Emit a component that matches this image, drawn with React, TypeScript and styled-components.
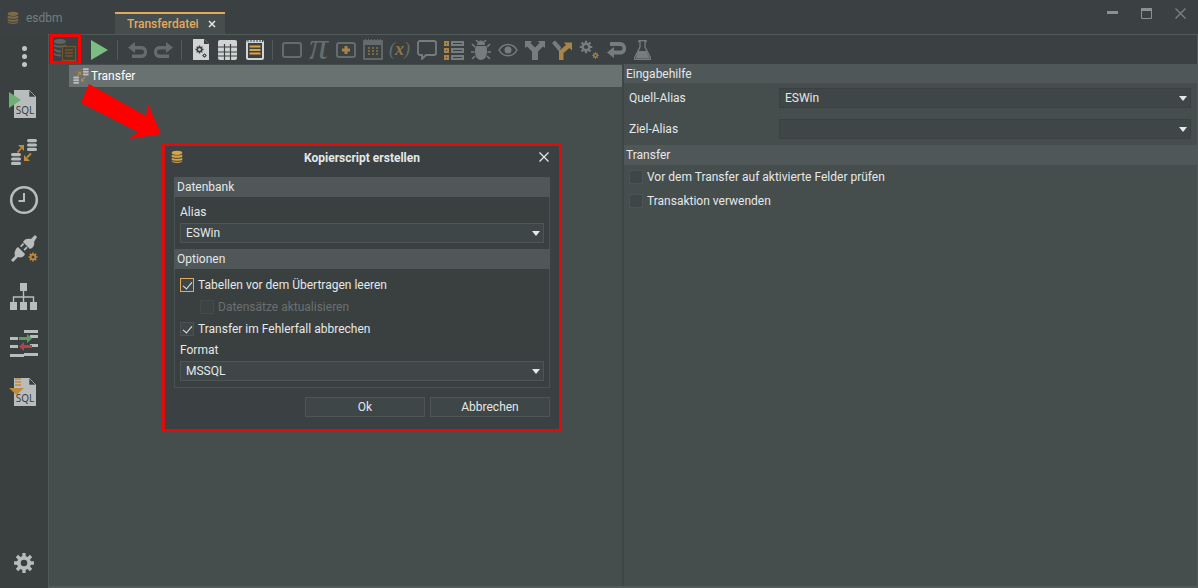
import React from "react";
import styled, { createGlobalStyle } from "styled-components";

const GlobalStyle = createGlobalStyle`
  html, body, #root { margin: 0; padding: 0; width: 100%; height: 100%; overflow: hidden; }
  body {
    background: #3b4142;
    color: #e4e8e8;
    font-family: Roboto, "Noto Sans", sans-serif;
    font-size: 12px;
  }
  * { box-sizing: border-box; }
`;

const GREY = "#777d7d";
const DIM = "#666c6c";
const ORANGE = "#a8834a";

const Db = ({ size = 16, color = ORANGE }: { size?: number; color?: string }) => (
  <svg width={size} height={size} viewBox="0 0 16 16">
    <ellipse cx="8" cy="3.2" rx="6" ry="2.4" fill={color} />
    <path d="M2 5.2c1 1.6 11 1.6 12 0v2.4c-1 1.6-11 1.6-12 0zM2 8.8c1 1.6 11 1.6 12 0v2.4c-1 1.6-11 1.6-12 0zM2 12.2c1 1.6 11 1.6 12 0v.6c-.6 2.6-11.4 2.6-12 0z" fill={color} />
  </svg>
);

const Ico = ({ children, w = 22, h = 22, vb = "0 0 22 22" }: { children: React.ReactNode; w?: number; h?: number; vb?: string }) => (
  <svg width={w} height={h} viewBox={vb}>{children}</svg>
);

const SqlDoc = ({ children }: { children?: React.ReactNode }) => (
  <Ico w={30} h={30} vb="0 0 30 30">
    <path d="M5 1h15l7 7v21H5z" fill="#b9bcbc" />
    <path d="M20 1l7 7h-7z" fill="#3a4040" stroke="#b9bcbc" strokeWidth=".6" />
    <text x="16" y="25" fontSize="10" textAnchor="middle" fill="#3a4040" fontFamily="Noto Sans, sans-serif">SQL</text>
    {children}
  </Ico>
);

const DbStack = ({ x, y }: { x: number; y: number }) => (
  <g transform={`translate(${x} ${y})`} fill="#b9bcbc">
    <rect x="0" y="0" width="10" height="3.2" rx="1.6" />
    <rect x="0" y="4.4" width="10" height="3.2" rx="1.6" />
    <rect x="0" y="8.8" width="10" height="3.2" rx="1.6" />
  </g>
);

const TransferIcon = ({ scale = 30 }: { scale?: number }) => (
  <Ico w={scale} h={scale} vb="0 0 30 30">
    <DbStack x={18} y={2} />
    <DbStack x={2} y={16} />
    <path d="M15 8v6L9 8z" fill="#c08a3c" />
    <path d="M8.5 15.5L12 11.5" stroke="#c08a3c" strokeWidth="1.8" />
    <path d="M15 24v-6l6 6z" fill="#c08a3c" />
    <path d="M22 16.5L18 20.5" stroke="#c08a3c" strokeWidth="1.8" />
  </Ico>
);

const Gear = ({ size = 20, color = "#b9bcbc", hole = "#3a4040" }: { size?: number; color?: string; hole?: string }) => (
  <svg width={size} height={size} viewBox="0 0 20 20">
    <g stroke={color} strokeWidth="3">
      <path d="M10 1v18M1 10h18M3.6 3.6l12.8 12.8M16.4 3.6L3.6 16.4" />
    </g>
    <circle cx="10" cy="10" r="6.4" fill={color} />
    <circle cx="10" cy="10" r="3" fill={hole} />
  </svg>
);

const App = () => (
  <Page>
    <GlobalStyle />
    <TitleBar>
      <AppName>
        <Db size={14} color="#7f6a48" />
        <span>esdbm</span>
      </AppName>
      <Tab>
        <TabLabel>Transferdatei</TabLabel>
        <svg width="8" height="8" viewBox="0 0 8 8"><path d="M1 1l6 6M7 1L1 7" stroke="#e4e8e8" strokeWidth="1.5" /></svg>
      </Tab>
      <WindowButtons>
        <svg width="11" height="4" viewBox="0 0 11 4"><rect y="0" width="11" height="3" fill="#8b9090" /></svg>
        <svg width="11" height="11" viewBox="0 0 11 11"><path d="M.5.5h10v10H.5z" fill="none" stroke="#8b9090" /><rect width="11" height="3" fill="#8b9090" /></svg>
        <svg width="11" height="11" viewBox="0 0 11 11"><path d="M.5.5l10 10M10.5.5l-10 10" stroke="#7b8080" strokeWidth="1.4" /></svg>
      </WindowButtons>
    </TitleBar>

    <Body>
      <Sidebar>
        <KebabItem $h={46}>
          <Kebab><i /><i /><i /></Kebab>
        </KebabItem>
        <SideItem>
          <SqlDoc><path d="M0 3l12 8-12 8z" fill="#6fae74" /></SqlDoc>
        </SideItem>
        <SideItem><TransferIcon /></SideItem>
        <SideItem>
          <Ico w={30} h={30} vb="0 0 30 30">
            <circle cx="15" cy="15" r="12.8" fill="none" stroke="#b9bcbc" strokeWidth="2.6" />
            <path d="M15 8v8H9.5" fill="none" stroke="#b9bcbc" strokeWidth="2" />
          </Ico>
        </SideItem>
        <SideItem $h={50}>
          <Ico w={30} h={30} vb="0 0 30 30">
            <path d="M14 8L21 15C24 14 26 11 25 8L28 3L26 1L22 5C19 4 15 5 14 8z" fill="#b9bcbc" />
            <path d="M9 13L16 20C15 23 12 24 9 23L4 28L2 26L6 22C5 19 6 15 9 13z" fill="#b9bcbc" />
            <path d="M11 12l3-3 1.2 1.2-3 3zM14.5 15.5l3-3 1.2 1.2-3 3z" fill="#b9bcbc" />
            <g transform="translate(19 18)"><Gear size={10} color="#c08a3c" /></g>
          </Ico>
        </SideItem>
        <SideItem $h={45}>
          <Ico w={30} h={30} vb="0 0 30 30">
            <path d="M11 1h7v8h-7zM1 20h7v8H1zM11 20h7v8h-7zM21 20h7v8h-7z" fill="#b9bcbc" />
            <path d="M14.5 9v11M4.5 20v-5h20v5" fill="none" stroke="#b9bcbc" strokeWidth="1.4" />
          </Ico>
        </SideItem>
        <SideItem $h={50}>
          <Ico w={30} h={30} vb="0 0 30 30">
            <g fill="#b9bcbc">
              <rect x="15" y="1" width="14" height="3" />
              <rect x="1" y="8" width="8" height="3" />
              <rect x="21" y="6" width="8" height="3" />
              <rect x="1" y="16" width="8" height="3" />
              <rect x="21" y="15" width="8" height="3" />
              <rect x="1" y="25" width="14" height="3" />
              <rect x="15" y="24" width="14" height="3" />
            </g>
            <path d="M10 8h8V5l5 4.5-5 4.5v-3h-8z" fill="#5f9a64" />
            <path d="M23 16h-8v-3l-5 4.5 5 4.5v-3h8z" fill="#b0444a" />
          </Ico>
        </SideItem>
        <SideItem $h={46}>
          <SqlDoc>
            <path d="M6 2h6M6 5h6M6 8h6" stroke="#c08a3c" strokeWidth="1.4" />
            <path d="M0 11h15l-7.500 7z" fill="#c08a3c" />
          </SqlDoc>
        </SideItem>
        <GearItem><Gear size={22} /></GearItem>
      </Sidebar>

      <Main>
        <Toolbar>
          <ToolBtn $w={32}>
            <Ico w={24} h={24} vb="0 0 24 24">
              <g fill="#5f6361">
                <ellipse cx="7" cy="3.5" rx="6" ry="2.5" />
                <path d="M1 6c1 2 11 2 12 0v2c-1 2-11 2-12 0zM1 10c1 2 7 2.500 7 2.500v2C6 15 2 14 1 12zM1 15c1 1 5 1.500 7 1.500v2c-2 0-6-.5-7-2z" />
              </g>
              <rect x="9.5" y="8.5" width="13" height="14" fill="#443e34" stroke="#6e5732" strokeWidth="1.2" />
              <path d="M12 12h8M12 15h8M12 18h8" stroke="#6e5732" strokeWidth="1.3" />
            </Ico>
          </ToolBtn>
          <ToolBtn $w={28} $ml={4}>
            <Ico w={20} h={22} vb="0 0 20 22"><path d="M2 1l17 10L2 21z" fill="#7cbd83" /></Ico>
          </ToolBtn>
          <Sep />
          <ToolBtn>
            <Ico w={20} h={18} vb="0 0 20 18"><path d="M8 1L1 6.5 8 12V8.500h6c2 0 3 1 3 2.500s-1 2.500-3 2.500H5V17h9c4 0 6-2.500 6-6s-2-6-6-6H8z" fill={DIM} /></Ico>
          </ToolBtn>
          <ToolBtn>
            <Ico w={20} h={18} vb="0 0 20 18"><path d="M12 1l7 5.5L12 12V8.500H6c-2 0-3 1-3 2.500s1 2.500 3 2.500h9V17H6c-4 0-6-2.500-6-6s2-6 6-6h6z" fill={DIM} /></Ico>
          </ToolBtn>
          <Sep />
          <ToolBtn>
            <Ico w={16} h={21} vb="0 0 16 21">
              <path d="M0 0h11l5 5v16H0z" fill="#d2d4d4" />
              <path d="M11 0l5 5h-5z" fill="#3b4142" />
              <g transform="translate(2 6)"><Gear size={9} color="#3b4142" hole="#d2d4d4" /></g>
              <g transform="translate(9 14)"><Gear size={5} color="#3b4142" hole="#d2d4d4" /></g>
            </Ico>
          </ToolBtn>
          <ToolBtn>
            <Ico w={19} h={20} vb="0 0 19 20">
              <rect width="19" height="20" rx="2" fill="#d2d4d4" />
              <path d="M0 7h19M0 12h19M0 16h19M6.5 4v16M12.5 4v16" stroke="#3b4142" strokeWidth="1.2" />
            </Ico>
          </ToolBtn>
          <ToolBtn>
            <Ico w={18} h={21} vb="0 0 18 21">
              <rect y="1" width="18" height="20" rx="2" fill="#d2d4d4" />
              <path d="M2 0v3M5 0v3M8 0v3M11 0v3M14 0v3M16.5 0v3" stroke="#3b4142" />
              <rect x="2" y="4" width="14" height="15" fill="#3b4142" />
              <path d="M3.5 7.5h11M3.5 11h11M3.5 14.5h11" stroke="#d9a445" strokeWidth="2" />
            </Ico>
          </ToolBtn>
          <Sep />
          <ToolBtn>
            <Ico w={20} h={16} vb="0 0 20 16"><rect x="1" y="1" width="18" height="14" rx="2" fill="none" stroke={DIM} strokeWidth="2" /></Ico>
          </ToolBtn>
          <ToolBtn>
            <PiGlyph>π</PiGlyph>
          </ToolBtn>
          <ToolBtn>
            <Ico w={20} h={16} vb="0 0 20 16">
              <rect x="1" y="1" width="18" height="14" rx="2" fill="none" stroke={DIM} strokeWidth="2" />
              <path d="M10 4v8M6 8h8" stroke={ORANGE} strokeWidth="3" />
            </Ico>
          </ToolBtn>
          <ToolBtn>
            <Ico w={20} h={21} vb="0 0 20 21">
              <rect x="1" y="2" width="18" height="18" fill="none" stroke={DIM} strokeWidth="1.8" />
              <rect x="1" y="2" width="18" height="4" fill={DIM} />
              <path d="M2.5 0v3M5.5 0v3M8.5 0v3M11.5 0v3M14.5 0v3M17.5 0v3" stroke={DIM} />
              <path d="M5 9h2M9 9h2M13 9h2M5 12h2M9 12h2M13 12h2M5 15h2M9 15h2M13 15h2" stroke="#8f7545" strokeWidth="1.5" />
            </Ico>
          </ToolBtn>
          <ToolBtn>
            <FuncGlyph>(<b>x</b>)</FuncGlyph>
          </ToolBtn>
          <ToolBtn>
            <Ico w={20} h={20} vb="0 0 20 20"><path d="M3 1h14c1 0 2 1 2 2v10c0 1-1 2-2 2H9l-4 4v-4H3c-1 0-2-1-2-2V3c0-1 1-2 2-2z" fill="none" stroke={GREY} strokeWidth="1.800" /></Ico>
          </ToolBtn>
          <ToolBtn>
            <Ico w={20} h={20} vb="0 0 20 20">
              <path d="M0 1h5v5H0zM0 8h5v5H0zM0 15h5v5H0z" fill={ORANGE} />
              <path d="M2 3h1v1H2zM2 10h1v1H2zM2 17h1v1H2z" fill="#3b4142" />
              <path d="M7 1h13v5H7zM7 8h13v5H7zM7 15h13v5H7z" fill={GREY} />
              <path d="M9 3h9v1H9zM9 10h9v1H9zM9 17h9v1H9z" fill="#3b4142" />
            </Ico>
          </ToolBtn>
          <ToolBtn>
            <Ico w={20} h={20} vb="0 0 20 20">
              <path d="M6 5c0-6 8-6 8 0zM5 6h10c1 1 1 3 1 6 0 5-3 8-6 8s-6-3-6-8c0-3 0-5 1-6z" fill={GREY} />
              <path d="M4 7L1 4M16 7l3-3M3.5 12H0M16.5 12H20M4 16l-3 3M16 16l3 3M7 2L5 0M13 2l2-2" stroke={GREY} strokeWidth="1.600" />
            </Ico>
          </ToolBtn>
          <ToolBtn>
            <Ico w={20} h={14} vb="0 0 20 14">
              <path d="M1 7c4-7.5 14-7.5 18 0-4 7.5-14 7.5-18 0z" fill="none" stroke={GREY} strokeWidth="1.500" />
              <circle cx="10" cy="7" r="3.5" fill={GREY} />
            </Ico>
          </ToolBtn>
          <ToolBtn>
            <Ico w={20} h={20} vb="0 0 20 20"><path d="M0 1h7L5.500 3 10 7.500 14.500 3 13 1h7v7l-2-1.500-5 5V20H7v-8.500l-5-5L0 8z" fill={GREY} /></Ico>
          </ToolBtn>
          <ToolBtn>
            <Ico w={20} h={20} vb="0 0 20 20">
              <path d="M0 3l3-2.500 6 6.500-1.500 5z" fill={GREY} />
              <path d="M7 20v-9L14 5l-2-2.500h8v8L17.500 8 11.500 13v7z" fill={ORANGE} />
            </Ico>
          </ToolBtn>
          <ToolBtn>
            <Ico w={20} h={20} vb="0 0 20 20">
              <Gear size={14} color={GREY} hole="#3b4142" />
              <g transform="translate(13 12)"><Gear size={7} color={ORANGE} hole="#3b4142" /></g>
            </Ico>
          </ToolBtn>
          <ToolBtn>
            <Ico w={20} h={18} vb="0 0 20 18"><path d="M8 6L1 11.500 8 17v-3.500h6c4 0 6-2.500 6-6S18 1 14 1H4v4h10c2 0 2.500 1 2.500 2.500S16 9.500 14 9.500H8z" fill={GREY} /></Ico>
          </ToolBtn>
          <ToolBtn>
            <Ico w={17} h={20} vb="0 0 17 20">
              <path d="M5 .5h7v1h-1V7l5.500 11c.5 1 0 1.500-1 1.500h-14c-1 0-1.500-.5-1-1.500L6 7V1.500H5z" fill="none" stroke={GREY} strokeWidth="1.300" />
              <path d="M4.500 11h8l3 7.500h-14z" fill={GREY} />
            </Ico>
          </ToolBtn>
        </Toolbar>

        <Panes>
          <TreePane>
            <TreeRow>
              <TransferIcon scale={18} />
              <span>Transfer</span>
            </TreeRow>
          </TreePane>
          <PropPane>
            <SectionHeader $h={19}>Eingabehilfe</SectionHeader>
            <PropGroup>
              <PropRow>
                <PropLabel>Quell-Alias</PropLabel>
                <Combo $fill>ESWin<Caret /></Combo>
              </PropRow>
              <PropRow>
                <PropLabel>Ziel-Alias</PropLabel>
                <Combo $fill><Caret /></Combo>
              </PropRow>
            </PropGroup>
            <SectionHeader>Transfer</SectionHeader>
            <CheckList>
              <CheckRow><Check />Vor dem Transfer auf aktivierte Felder prüfen</CheckRow>
              <CheckRow><Check />Transaktion verwenden</CheckRow>
            </CheckList>
          </PropPane>
        </Panes>
      </Main>
    </Body>

    <Highlight />
    <Arrow width="82" height="56" viewBox="0 0 82 56">
      <path d="M8 0L65 32 67 20 80 50 48 55 57 48 0 19z" fill="#ff0000" />
    </Arrow>

    <Dialog>
      <DialogTitle>
        <DialogIcon><Db size={14} color="#d9a445" /></DialogIcon>
        <strong>Kopierscript erstellen</strong>
        <DialogClose>
          <svg width="10" height="10" viewBox="0 0 10 10"><path d="M.5.5l9 9M9.5.5l-9 9" stroke="#e4e8e8" strokeWidth="1.300" /></svg>
        </DialogClose>
      </DialogTitle>
      <DialogBody>
        <GroupHeader>Datenbank</GroupHeader>
        <GroupBox>
          <FieldLabel>Alias</FieldLabel>
          <Combo>ESWin<Caret /></Combo>
        </GroupBox>
        <GroupHeader>Optionen</GroupHeader>
        <OptionBox>
          <CheckRow $h={22}><Check $on $focus />Tabellen vor dem Übertragen leeren</CheckRow>
          <CheckRow $h={22} $indent $off><Check $off />Datensätze aktualisieren</CheckRow>
          <CheckRow $h={22}><Check $on />Transfer im Fehlerfall abbrechen</CheckRow>
          <FieldLabel $mt={1}>Format</FieldLabel>
          <Combo>MSSQL<Caret /></Combo>
        </OptionBox>
        <DialogButtons>
          <Btn>Ok</Btn>
          <Btn>Abbrechen</Btn>
        </DialogButtons>
      </DialogBody>
    </Dialog>
  </Page>
);

const Page = styled.div`
  position: relative;
  width: 1198px;
  height: 588px;
  display: flex;
  flex-direction: column;
  background: #3b4142;
  overflow: hidden;
`;

const TitleBar = styled.div`
  height: 34px;
  display: flex;
  align-items: flex-end;
  flex-shrink: 0;
`;

const AppName = styled.div`
  width: 115px;
  height: 34px;
  padding: 2px 0 0 6px;
  display: flex;
  align-items: center;
  gap: 6px;
  color: #717e7f;
  font-size: 12px;
`;

const Tab = styled.div`
  width: 110px;
  height: 22px;
  padding: 0 9px 0 12px;
  display: flex;
  align-items: center;
  justify-content: space-between;
  background: #454d4d;
  border-top: 2px solid #e3aa5c;
`;

const TabLabel = styled.span`
  color: #e3aa5c;
  font-weight: 500;
`;

const WindowButtons = styled.div`
  margin-left: auto;
  height: 34px;
  padding: 0 12px 8px 0;
  display: flex;
  align-items: center;
  gap: 23px;
`;

const Body = styled.div`
  flex: 1;
  display: flex;
  min-height: 0;
`;

const Sidebar = styled.div`
  width: 48px;
  display: flex;
  flex-direction: column;
  align-items: center;
  background: #3a4040;
`;

const SideItem = styled.div<{ $h?: number }>`
  height: ${(p) => p.$h ?? 48}px;
  width: 100%;
  flex-shrink: 0;
  display: flex;
  align-items: center;
  justify-content: center;
`;

const KebabItem = styled(SideItem)`
  padding-bottom: 2px;
`;

const GearItem = styled(SideItem)`
  margin-top: auto;
  height: 50px;
`;

const Kebab = styled.div`
  display: flex;
  flex-direction: column;
  gap: 3px;
  i {
    display: block;
    width: 5px;
    height: 5px;
    border-radius: 50%;
    background: #c2c5c5;
  }
`;

const Main = styled.div`
  flex: 1;
  min-width: 0;
  display: flex;
  flex-direction: column;
  border: 1px solid #515959;
  border-bottom-width: 2px;
  background: #454d4d;
`;

const Toolbar = styled.div`
  height: 29px;
  display: flex;
  align-items: center;
  flex-shrink: 0;
  background: #3b4142;
`;

const ToolBtn = styled.div<{ $w?: number; $ml?: number }>`
  width: ${(p) => p.$w ?? 27}px;
  margin-left: ${(p) => p.$ml ?? 0}px;
  height: 100%;
  flex-shrink: 0;
  display: flex;
  align-items: center;
  justify-content: center;
  overflow: visible;
`;

const Sep = styled.div`
  width: 1px;
  height: 20px;
  margin: 0 5px 0 4px;
  flex-shrink: 0;
  background: #525a5a;
`;

const PiGlyph = styled.span`
  font-family: "Liberation Serif", serif;
  font-style: italic;
  font-size: 38px;
  line-height: 29px;
  height: 29px;
  margin-top: -6px;
  color: ${DIM};
`;

const FuncGlyph = styled.span`
  font-family: "Liberation Serif", serif;
  font-style: italic;
  font-size: 18px;
  white-space: nowrap;
  color: ${DIM};
  b {
    color: #8f7545;
  }
`;

const Panes = styled.div`
  flex: 1;
  display: flex;
  min-height: 0;
`;

const TreePane = styled.div`
  width: 575px;
  padding: 1px 0 0 20px;
  flex-shrink: 0;
  border-right: 2px solid #3f4647;
`;

const TreeRow = styled.div`
  height: 22px;
  padding-left: 3px;
  display: flex;
  align-items: center;
  gap: 1px;
  background: #697171;
  color: #fff;
`;

const PropPane = styled.div`
  flex: 1;
  min-width: 0;
`;

const SectionHeader = styled.div<{ $h?: number }>`
  height: ${(p) => p.$h ?? 20}px;
  padding-left: 2px;
  display: flex;
  align-items: center;
  background: #4f5758;
`;

const PropGroup = styled.div`
  padding: 5px 6px 6px 5px;
  display: flex;
  flex-direction: column;
  gap: 11px;
`;

const PropRow = styled.div`
  display: grid;
  grid-template-columns: 150px 1fr;
  align-items: center;
`;

const PropLabel = styled.div``;

const Combo = styled.div<{ $fill?: boolean }>`
  position: relative;
  height: 20px;
  padding-left: 5px;
  display: flex;
  align-items: center;
  background: #3f4647;
  border: 1px solid ${(p) => (p.$fill ? "#3b4142" : "#4d5555")};
`;

const Caret = styled.span`
  position: absolute;
  right: 3px;
  top: 7px;
  width: 0;
  height: 0;
  border-left: 4px solid transparent;
  border-right: 4px solid transparent;
  border-top: 5px solid #e4e8e8;
`;

const CheckList = styled.div`
  padding-left: 5px;
  display: flex;
  flex-direction: column;
`;

const CheckRow = styled.div<{ $h?: number; $indent?: boolean; $off?: boolean }>`
  height: ${(p) => p.$h ?? 24}px;
  padding-left: ${(p) => (p.$indent ? 20 : 0)}px;
  display: flex;
  align-items: center;
  gap: 4px;
  color: ${(p) => (p.$off ? "#697070" : "inherit")};
`;

const Check = styled.span<{ $on?: boolean; $focus?: boolean; $off?: boolean }>`
  position: relative;
  width: 14px;
  height: 14px;
  flex-shrink: 0;
  background: ${(p) => (p.$off ? "#3d4344" : "#3f4647")};
  border: 1px solid ${(p) => (p.$focus ? "#e3aa5c" : p.$off ? "#434a4a" : "#4a5252")};
  ${(p) =>
    p.$on
      ? `&::after {
    content: "";
    position: absolute;
    left: 4px;
    top: 1px;
    width: 4px;
    height: 8px;
    border: solid #e8eaea;
    border-width: 0 1.5px 1.5px 0;
    transform: rotate(40deg);
  }`
      : ""}
`;

const Highlight = styled.div`
  position: absolute;
  left: 50px;
  top: 34px;
  width: 31px;
  height: 30px;
  border: 3px solid #ff0000;
`;

const Arrow = styled.svg`
  position: absolute;
  left: 81px;
  top: 84px;
`;

const Dialog = styled.div`
  position: absolute;
  left: 162px;
  top: 143px;
  width: 400px;
  height: 289px;
  display: flex;
  flex-direction: column;
  background: #3b4142;
  border: 3px solid #e00c0c;
`;

const DialogTitle = styled.div`
  position: relative;
  height: 31px;
  flex-shrink: 0;
  display: flex;
  align-items: center;
  justify-content: center;
  padding-bottom: 8px;
  strong {
    font-weight: 700;
  }
`;

const DialogIcon = styled.span`
  position: absolute;
  left: 5px;
  top: 4px;
  line-height: 0;
`;

const DialogClose = styled.span`
  position: absolute;
  right: 10px;
  top: 6px;
  line-height: 0;
`;

const DialogBody = styled.div`
  padding: 0 9px;
  display: flex;
  flex-direction: column;
`;

const GroupHeader = styled.div`
  height: 20px;
  padding-left: 3px;
  display: flex;
  align-items: center;
  background: #4f5758;
`;

const GroupBox = styled.div`
  padding: 6px 5px 6px;
  border: solid #4a5252;
  border-width: 0 1px;
  background: #3a4040;
`;

const OptionBox = styled(GroupBox)`
  padding: 5px 5px 6px;
  border-width: 0 1px 1px;
`;

const FieldLabel = styled.div<{ $mt?: number }>`
  height: 18px;
  margin-top: ${(p) => p.$mt ?? 0}px;
  margin-bottom: 2px;
  display: flex;
  align-items: center;
`;

const DialogButtons = styled.div`
  margin-top: 9px;
  display: flex;
  justify-content: flex-end;
  gap: 5px;
`;

const Btn = styled.div`
  width: 120px;
  height: 20px;
  display: flex;
  align-items: center;
  justify-content: center;
  background: #3f4647;
  border: 1px solid #4d5555;
`;

export default App;
